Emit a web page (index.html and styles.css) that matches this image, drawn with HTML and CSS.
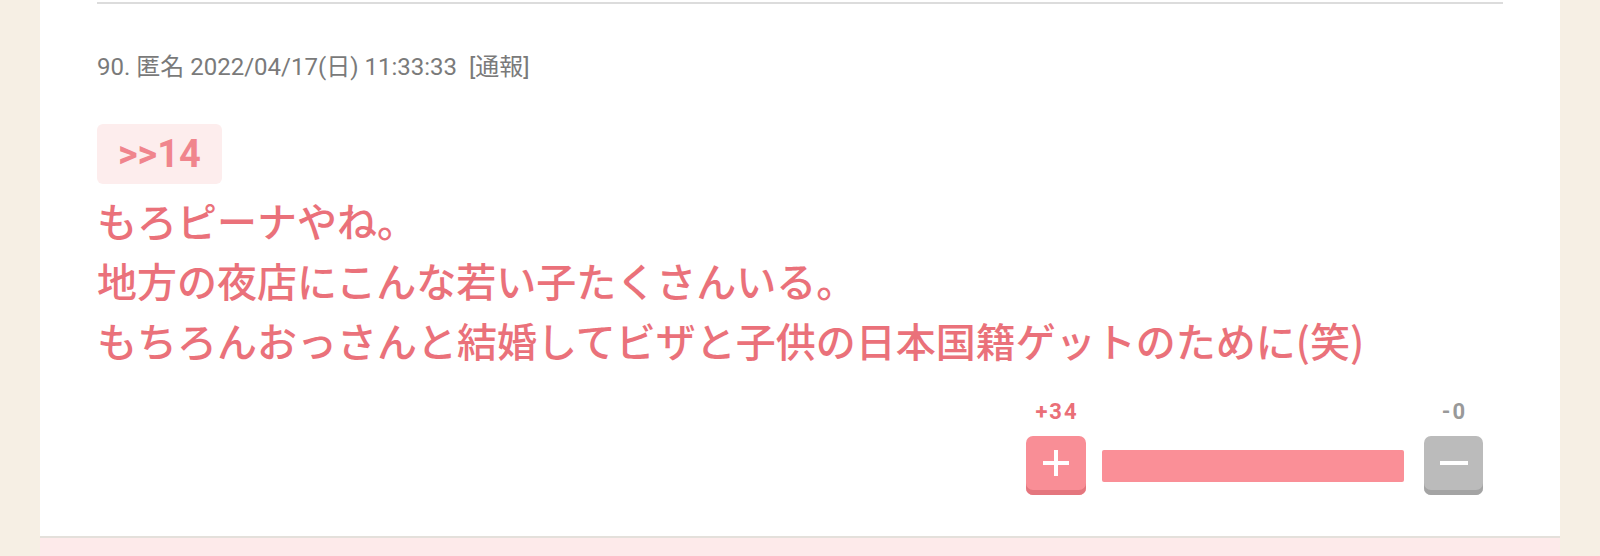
FILE: index.html
```html
<!DOCTYPE html>
<html lang="ja">
<head>
<meta charset="utf-8">
<title>comment</title>
<link rel="stylesheet" href="styles.css">
</head>
<body>
<div class="page">
  <main class="panel">
    <div class="rule"></div>
    <article class="comment">
      <div class="meta">90. 匿名 2022/04/17(日) 11:33:33&nbsp;&nbsp;[通報]</div>
      <div class="anchor"><span class="anchor-badge">&gt;&gt;14</span></div>
      <div class="body">もろピーナやね。<br>地方の夜店にこんな若い子たくさんいる。<br>もちろんおっさんと結婚してビザと子供の日本国籍ゲットのために(笑)</div>
      <div class="vote">
        <div class="vote-grid">
          <span class="count plus-count">+34</span>
          <span class="count minus-count">-0</span>
          <button class="btn btn-plus" aria-label="plus">
            <svg width="30" height="30" viewBox="0 0 30 30"><path d="M15 2v26M2 15h26" stroke="#fff" stroke-width="4" fill="none"/></svg>
          </button>
          <div class="bar"><div class="bar-fill" style="width:100%"></div></div>
          <button class="btn btn-minus" aria-label="minus">
            <svg width="30" height="30" viewBox="0 0 30 30"><path d="M1 15h28" stroke="#fff" stroke-width="4" fill="none"/></svg>
          </button>
        </div>
      </div>
    </article>
  </main>
  <div class="next"></div>
</div>
</body>
</html>
```
FILE: styles.css
```css
html, body {
  margin: 0;
  padding: 0;
}
body {
  background: #f6efe4;
  font-family: Roboto, "Noto Sans CJK JP", sans-serif;
  height: 556px;
  overflow: hidden;
}
.page {
  display: flex;
  flex-direction: column;
}
.panel {
  margin: 0 40px;
  background: #ffffff;
  padding: 2px 57px 0 57px;
  border-bottom: 2px solid #e4e0db;
  height: 538px;
  box-sizing: border-box;
}
.rule {
  height: 2px;
  background: #dcdcdc;
}
.comment {
  display: flex;
  flex-direction: column;
}
.meta {
  margin-top: 48px;
  font-size: 24px;
  line-height: 30px;
  color: #7a7a7a;
  font-family: Roboto, "Noto Sans CJK JP", sans-serif;
}
.anchor {
  margin-top: 42px;
  display: flex;
}
.anchor-badge {
  display: inline-block;
  background: #fdeded;
  color: #f0858d;
  font-family: Roboto, "Noto Sans CJK JP", sans-serif;
  font-weight: 700;
  font-size: 38px;
  line-height: 60px;
  height: 60px;
  padding: 0 21px 0 21px;
  border-radius: 6px;
}
.body {
  margin-top: 6px;
  font-family: "Noto Sans CJK JP", sans-serif;
  font-weight: 500;
  font-size: 40px;
  line-height: 60px;
  color: #ea717a;
}
.vote {
  display: flex;
  justify-content: flex-end;
  padding-right: 20px;
  margin-top: 30px;
}
.vote-grid {
  display: grid;
  grid-template-columns: 60px 302px 59px;
  grid-template-rows: 24px 59px;
  column-gap: 0;
  row-gap: 12px;
}
.plus-count { grid-column: 1; }
.minus-count { grid-column: 3; }
.count {
  text-align: center;
  font-family: Roboto, sans-serif;
  font-weight: 700;
  font-size: 22px;
  letter-spacing: 2px;
  line-height: 24px;
  padding-left: 2px;
}
.plus-count { color: #ea6f78; }
.minus-count { color: #999999; }
.btn {
  border: none;
  margin: 0;
  width: 100%;
  height: 59px;
  border-radius: 7px;
  display: flex;
  align-items: center;
  justify-content: center;
  box-sizing: border-box;
  padding: 0 0 5px 0;
}
.btn-plus {
  background: #f98e96;
  box-shadow: inset 0 -5px 0 #e4767e;
}
.btn-minus {
  background: #bbbbbb;
  box-shadow: inset 0 -5px 0 #a4a4a4;
}
.bar {
  align-self: start;
  margin: 14px 20px 0 16px;
  height: 32px;
  background: #f2f2f2;
  border-radius: 2px;
  overflow: hidden;
}
.bar-fill {
  height: 100%;
  background: #fa8f97;
}
.vote-grid {
  grid-template-columns: 60px 338px 59px;
}
.next {
  margin: 0 40px;
  height: 20px;
  background: #fdeaea;
}
```
